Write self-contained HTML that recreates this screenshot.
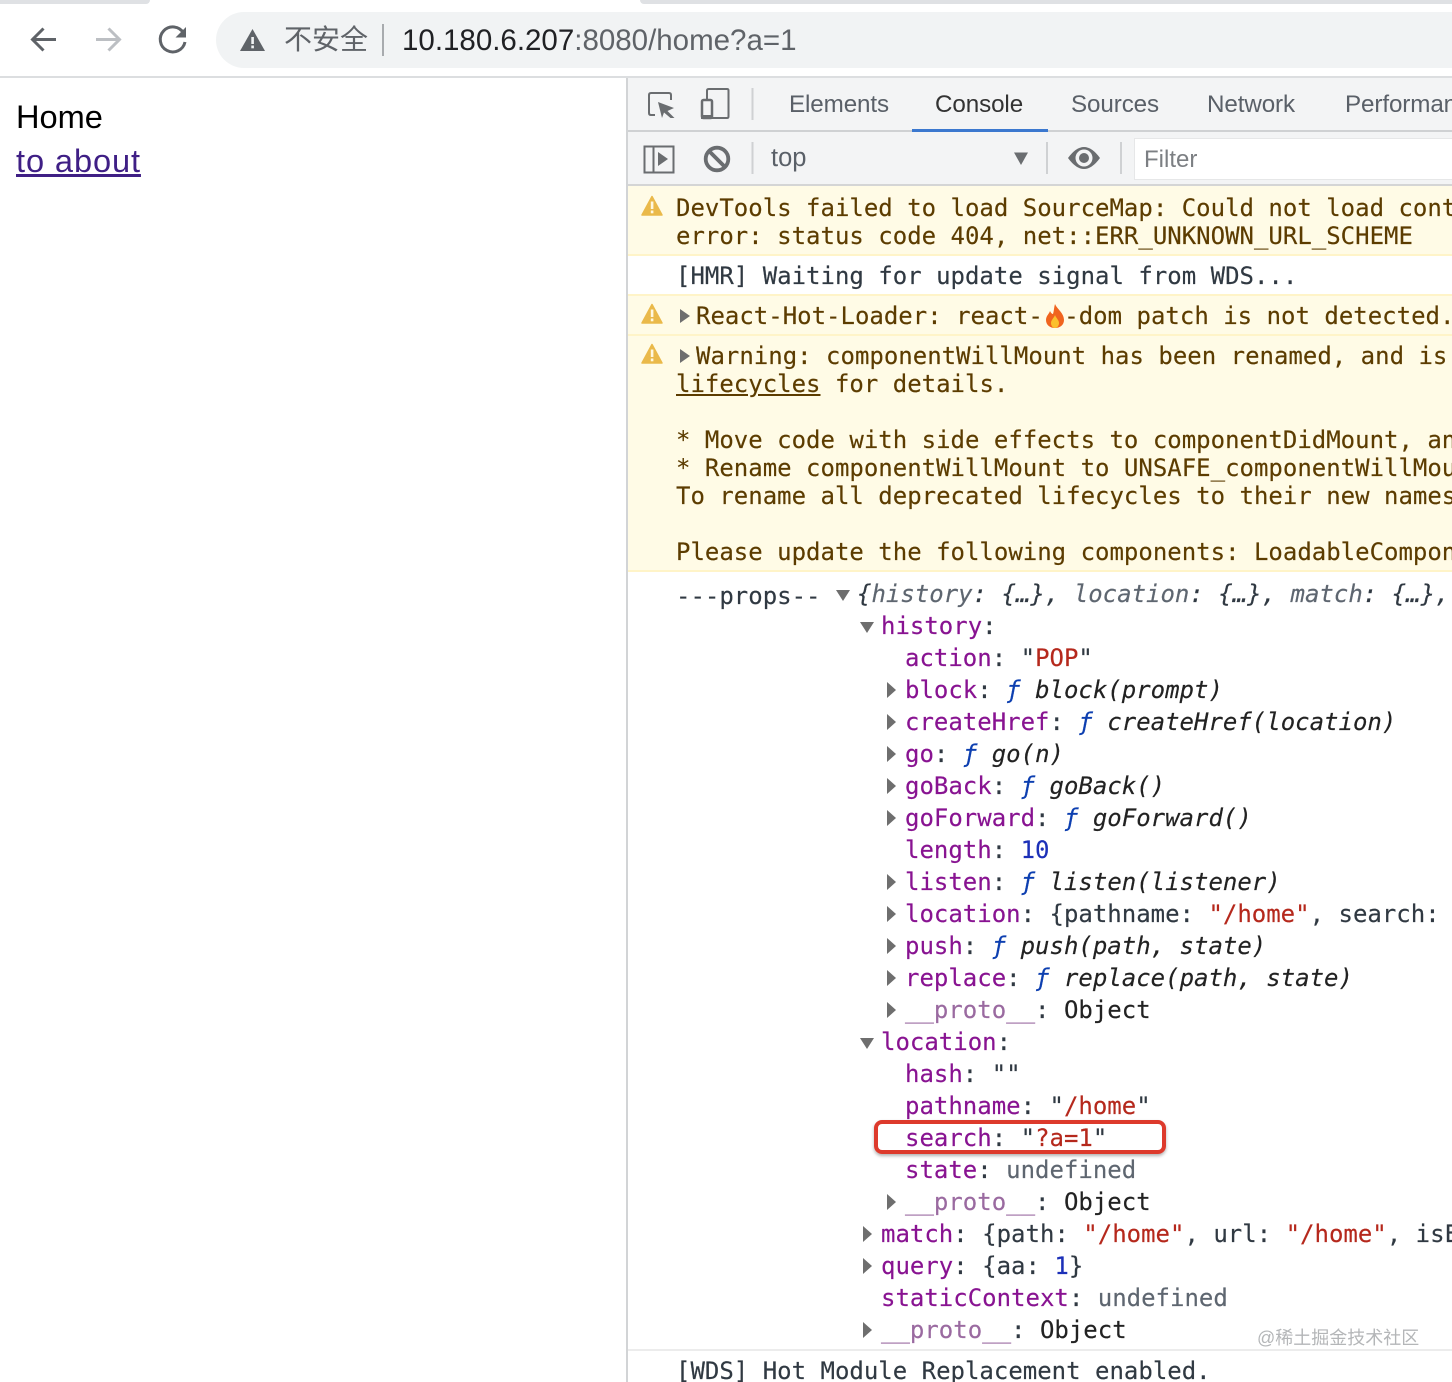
<!DOCTYPE html>
<html lang="zh"><head><meta charset="utf-8"><title>Home</title>
<style>
html,body{margin:0;padding:0;background:#fff;overflow:hidden;width:1452px;height:1382px}
#r{position:absolute;left:0;top:0;width:1452px;height:1382px;overflow:hidden;font-family:"Liberation Sans","Noto Sans CJK SC",sans-serif}
.a{position:absolute}
.l{position:absolute;white-space:pre;font:24px/28px "DejaVu Sans Mono",monospace;height:28px;color:#303942;-webkit-text-stroke:.15px currentColor}
.w{color:#5c3c00}
.p{color:#881391}
.s{color:#b5281c}
.n{color:#1c30b8}
.g{color:#5e6670}
.d{color:#9a6aa0}
.k{color:#222}
.i{font-style:italic}
.f{color:#0d3fb0;font-style:italic}
.t{position:absolute;top:90px;font-size:24.200px;line-height:30px;color:#5a6068;letter-spacing:-.1px}
svg{position:absolute;overflow:hidden}
</style></head><body><div id="r">

<div class="a" style="left:0;top:0;width:150px;height:4px;background:#dfe1e4;border-radius:0 0 8px 0"></div>
<div class="a" style="left:640px;top:0;width:812px;height:4px;background:#dfe1e4;border-radius:0 0 0 8px"></div>

<svg style="left:0;top:0" width="220" height="76" fill="none">
<path d="M56 39.500H33M43.500 28.500L32.500 39.500L43.500 50.500" stroke="#5f6368" stroke-width="3"/>
<path d="M96 39.500H119M108.500 28.500L119.500 39.500L108.500 50.500" stroke="#bcbfc3" stroke-width="3"/>
<path d="M183.500 33A12.500 12.500 0 1 0 185 42" stroke="#5f6368" stroke-width="3"/>
<path d="M186 27V37.500H175.500Z" fill="#5f6368"/>
</svg>
<div class="a" style="left:216px;top:12px;width:1236px;height:56px;border-radius:28px 0 0 28px;background:#f1f3f4"></div>
<svg style="left:240px;top:29px" width="26" height="23"><path d="M12.500 0L25 22H0Z" fill="#5f6368"/><rect x="11.300" y="8" width="2.600" height="7" fill="#f1f3f4"/><rect x="11.300" y="16.500" width="2.600" height="2.800" fill="#f1f3f4"/></svg>
<div class="a" style="left:284px;top:22px;font-size:28px;line-height:36px;color:#5f6368;white-space:pre">不安全</div>
<div class="a" style="left:382px;top:24px;width:2px;height:32px;background:#a8abae"></div>
<div class="a" style="left:402px;top:23px;font-size:29.500px;line-height:36px;white-space:pre;color:#202124">10.180.6.207<span style="color:#5f6368">:8080/home?a=1</span></div>
<div class="a" style="left:0;top:76px;width:1452px;height:2px;background:#dcdee0"></div>

<div class="a" style="left:16px;top:98px;font-size:32.600px;line-height:38px;color:#000;white-space:pre">Home</div>
<div class="a" style="left:16px;top:142px;font-size:32.600px;line-height:38px;color:#3f1f85;text-decoration:underline;white-space:pre;letter-spacing:.9px">to about</div>

<div class="a" style="left:626px;top:78px;width:2px;height:1304px;background:#d2d4d6"></div>
<div class="a" style="left:628px;top:78px;width:824px;height:108px;background:#f3f4f5"></div>
<div class="a" style="left:628px;top:130px;width:824px;height:2px;background:#cfd1d3"></div>
<div class="a" style="left:628px;top:184px;width:824px;height:2px;background:#d4d5d5"></div>

<svg style="left:628px;top:78px" width="824" height="108" fill="none">
<path d="M43 22V17Q43 15 41 15H23Q21 15 21 17V35Q21 37 23 37H27" stroke="#6a6d70" stroke-width="2"/>
<path d="M30 24L46 30L39.500 33L46.500 40L42.500 40L36 34.500L34 40Z" fill="#6a6d70"/>
<path d="M79 22V12.500Q79 11 81 11H99Q100.500 11 100.500 12.500V38.500Q100.500 40 99 40H85" stroke="#6a6d70" stroke-width="2"/>
<rect x="74" y="22" width="10" height="18" rx="1.500" stroke="#6a6d70" stroke-width="2.500"/>
<rect x="73" y="37" width="12" height="4" fill="#6a6d70"/>
<rect x="123.500" y="10" width="2" height="32" fill="#cfd1d3"/>
<rect x="16.500" y="68.500" width="29" height="26" stroke="#6a6d70" stroke-width="2"/>
<path d="M25.500 68.500V94.500" stroke="#6a6d70" stroke-width="2"/>
<path d="M30 74L40 81L30 88Z" fill="#6a6d70"/>
<circle cx="89" cy="81" r="11.300" stroke="#6a6d70" stroke-width="3.800"/>
<path d="M81 73L97 89" stroke="#6a6d70" stroke-width="3.800"/>
<rect x="123.500" y="64" width="2" height="32" fill="#cfd1d3"/>
<path d="M386 74.500H400L393 87Z" fill="#6a6d70"/>
<rect x="418" y="64" width="2" height="32" fill="#cfd1d3"/>
<path d="M440 80Q448 69 456 69Q464 69 472 80Q464 91 456 91Q448 91 440 80Z" fill="#6a6d70"/>
<circle cx="456" cy="80" r="8.500" fill="#f3f4f5"/><circle cx="456" cy="80" r="5" fill="#6a6d70"/>
<rect x="492" y="64" width="2" height="32" fill="#cfd1d3"/>
</svg>

<div class="t" style="left:789px">Elements</div>
<div class="t" style="left:935px;color:#333">Console</div>
<div class="t" style="left:1071px">Sources</div>
<div class="t" style="left:1207px">Network</div>
<div class="t" style="left:1345px">Performance</div>
<div class="a" style="left:912px;top:129px;width:136px;height:3px;background:#3b78cf"></div>
<div class="a" style="left:771px;top:143px;font-size:25.500px;line-height:30px;color:#5a6068">top</div>
<div class="a" style="left:1135px;top:139px;width:317px;height:40px;background:#fff;box-shadow:0 0 0 1px #e6e7e8"></div>
<div class="a" style="left:1144px;top:145px;font-size:24px;line-height:30px;color:#7c7f83">Filter</div>

<div class="a" style="left:628px;top:186px;width:824px;height:70px;background:#fffbe6;border-bottom:2px solid #fff4c8;box-sizing:border-box"></div>
<div class="a" style="left:628px;top:294px;width:824px;height:40px;background:#fffbe6;border-top:2px solid #fff4c8;box-sizing:border-box"></div>
<div class="a" style="left:628px;top:334px;width:824px;height:238px;background:#fffbe6;border-top:2px solid #fff4c8;border-bottom:2px solid #fff4c8;box-sizing:border-box"></div>
<div class="a" style="left:628px;top:1349px;width:824px;height:2px;background:#ececec"></div>

<svg style="left:641px;top:195px" width="24" height="22"><path d="M11 1.500L21 20H1Z" fill="#eab94a" stroke="#eab94a" stroke-width="1.500" stroke-linejoin="round"/><rect x="9.800" y="6.500" width="2.600" height="7.500" fill="#fff8e0"/><rect x="9.800" y="15.500" width="2.600" height="2.800" fill="#fff8e0"/></svg>
<svg style="left:641px;top:303px" width="24" height="22"><path d="M11 1.500L21 20H1Z" fill="#eab94a" stroke="#eab94a" stroke-width="1.500" stroke-linejoin="round"/><rect x="9.800" y="6.500" width="2.600" height="7.500" fill="#fff8e0"/><rect x="9.800" y="15.500" width="2.600" height="2.800" fill="#fff8e0"/></svg>
<svg style="left:641px;top:343px" width="24" height="22"><path d="M11 1.500L21 20H1Z" fill="#eab94a" stroke="#eab94a" stroke-width="1.500" stroke-linejoin="round"/><rect x="9.800" y="6.500" width="2.600" height="7.500" fill="#fff8e0"/><rect x="9.800" y="15.500" width="2.600" height="2.800" fill="#fff8e0"/></svg>

<svg style="left:0;top:0" width="1000" height="1382">
<g fill="#6e6e6e">
<path d="M680 309L690 316L680 323Z"/><path d="M680 349L690 356L680 363Z"/>
<path d="M836 590H850L843 601Z"/><path d="M860 622H874L867 633Z"/>
<path d="M887 682L896 690L887 698Z"/><path d="M887 714L896 722L887 730Z"/><path d="M887 746L896 754L887 762Z"/><path d="M887 778L896 786L887 794Z"/><path d="M887 810L896 818L887 826Z"/><path d="M887 874L896 882L887 890Z"/><path d="M887 906L896 914L887 922Z"/><path d="M887 938L896 946L887 954Z"/><path d="M887 970L896 978L887 986Z"/><path d="M887 1002L896 1010L887 1018Z"/>
<path d="M860 1038H874L867 1049Z"/>
<path d="M887 1194L896 1202L887 1210Z"/>
<path d="M863 1226L872 1234L863 1242Z"/><path d="M863 1258L872 1266L863 1274Z"/><path d="M863 1322L872 1330L863 1338Z"/>
</g>
</svg>

<div class="l w" style="left:676px;top:194px">DevTools failed to load SourceMap: Could not load cont</div>
<div class="l w" style="left:676px;top:222px">error: status code 404, net::ERR_UNKNOWN_URL_SCHEME</div>
<div class="l" style="left:676px;top:262px">[HMR] Waiting for update signal from WDS...</div>
<div class="l w" style="left:696px;top:302px">React-Hot-Loader: react-<span style="display:inline-block;width:21.500px"></span>-dom patch is not detected.</div>
<svg style="left:1045px;top:304px" width="22" height="24"><path d="M10 0C12 5 19 9 19 16C19 21 15 24 10 24C5 24 1 21 1 16C1 12 4 10 5 7C6 9 7 10 8 10C9 7 9 3 10 0Z" fill="#f0641e"/><path d="M10 11C11 14 14 16 14 19C14 22 12 24 10 24C8 24 6 22 6 19C6 16 9 14 10 11Z" fill="#fbc02d"/></svg>
<div class="l w" style="left:696px;top:342px">Warning: componentWillMount has been renamed, and is</div>
<div class="l w" style="left:676px;top:370px"><u>lifecycles</u> for details.</div>
<div class="l w" style="left:676px;top:426px">* Move code with side effects to componentDidMount, an</div>
<div class="l w" style="left:676px;top:454px">* Rename componentWillMount to UNSAFE_componentWillMou</div>
<div class="l w" style="left:676px;top:482px">To rename all deprecated lifecycles to their new names</div>
<div class="l w" style="left:676px;top:538px">Please update the following components: LoadableCompon</div>

<div class="l" style="left:676px;top:582px">---props--</div>
<div class="l i" style="left:857px;top:580px">{<span class="g">history</span>: {…}, <span class="g">location</span>: {…}, <span class="g">match</span>: {…},</div>
<div class="l" style="left:881px;top:612px"><span class="p">history</span>:</div>
<div class="l" style="left:905px;top:644px"><span class="p">action</span>: "<span class="s">POP</span>"</div>
<div class="l" style="left:905px;top:676px"><span class="p">block</span>: <span class="f">ƒ</span> <span class="i k">block(prompt)</span></div>
<div class="l" style="left:905px;top:708px"><span class="p">createHref</span>: <span class="f">ƒ</span> <span class="i k">createHref(location)</span></div>
<div class="l" style="left:905px;top:740px"><span class="p">go</span>: <span class="f">ƒ</span> <span class="i k">go(n)</span></div>
<div class="l" style="left:905px;top:772px"><span class="p">goBack</span>: <span class="f">ƒ</span> <span class="i k">goBack()</span></div>
<div class="l" style="left:905px;top:804px"><span class="p">goForward</span>: <span class="f">ƒ</span> <span class="i k">goForward()</span></div>
<div class="l" style="left:905px;top:836px"><span class="p">length</span>: <span class="n">10</span></div>
<div class="l" style="left:905px;top:868px"><span class="p">listen</span>: <span class="f">ƒ</span> <span class="i k">listen(listener)</span></div>
<div class="l" style="left:905px;top:900px"><span class="p">location</span>: {pathname: <span class="s">"/home"</span>, search:</div>
<div class="l" style="left:905px;top:932px"><span class="p">push</span>: <span class="f">ƒ</span> <span class="i k">push(path, state)</span></div>
<div class="l" style="left:905px;top:964px"><span class="p">replace</span>: <span class="f">ƒ</span> <span class="i k">replace(path, state)</span></div>
<div class="l" style="left:905px;top:996px"><span class="d">__proto__</span>: <span class="k">Object</span></div>
<div class="l" style="left:881px;top:1028px"><span class="p">location</span>:</div>
<div class="l" style="left:905px;top:1060px"><span class="p">hash</span>: ""</div>
<div class="l" style="left:905px;top:1092px"><span class="p">pathname</span>: "<span class="s">/home</span>"</div>
<div class="l" style="left:905px;top:1124px"><span class="p">search</span>: "<span class="s">?a=1</span>"</div>
<div class="l" style="left:905px;top:1156px"><span class="p">state</span>: <span class="g">undefined</span></div>
<div class="l" style="left:905px;top:1188px"><span class="d">__proto__</span>: <span class="k">Object</span></div>
<div class="l" style="left:881px;top:1220px"><span class="p">match</span>: {path: <span class="s">"/home"</span>, url: <span class="s">"/home"</span>, isE</div>
<div class="l" style="left:881px;top:1252px"><span class="p">query</span>: {aa: <span class="n">1</span>}</div>
<div class="l" style="left:881px;top:1284px"><span class="p">staticContext</span>: <span class="g">undefined</span></div>
<div class="l" style="left:881px;top:1316px"><span class="d">__proto__</span>: <span class="k">Object</span></div>
<div class="l" style="left:676px;top:1357px">[WDS] Hot Module Replacement enabled.</div>

<div class="a" style="left:874px;top:1120px;width:292px;height:34px;border:4px solid #dd3a2c;border-radius:8px;box-sizing:border-box;box-shadow:0 2px 3px rgba(0,0,0,.3)"></div>
<div class="a" style="left:1257px;top:1326px;font-size:18px;line-height:24px;color:#b4b6b8;white-space:pre">@稀土掘金技术社区</div>
</div></body></html>
